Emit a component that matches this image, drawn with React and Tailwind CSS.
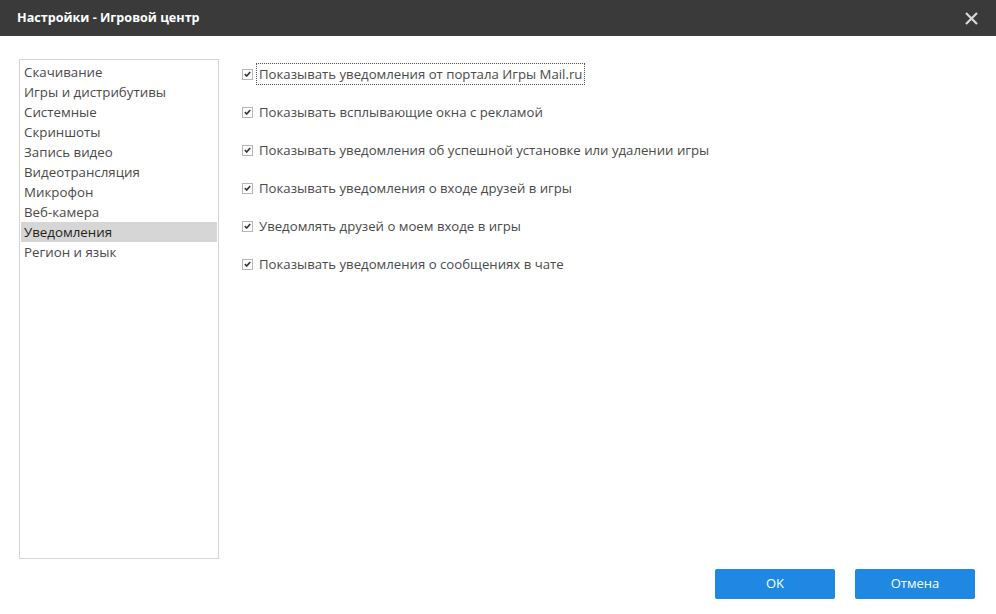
import React, { useState } from 'react';

const MENU = [
  'Скачивание',
  'Игры и дистрибутивы',
  'Системные',
  'Скриншоты',
  'Запись видео',
  'Видеотрансляция',
  'Микрофон',
  'Веб-камера',
  'Уведомления',
  'Регион и язык',
];

const OPTIONS = [
  'Показывать уведомления от портала Игры Mail.ru',
  'Показывать всплывающие окна с рекламой',
  'Показывать уведомления об успешной установке или удалении игры',
  'Показывать уведомления о входе друзей в игры',
  'Уведомлять друзей о моем входе в игры',
  'Показывать уведомления о сообщениях в чате',
];

const CheckBox = ({ checked }) => (
  <span className="w-[11px] h-[11px] border border-[#b5b5b5] bg-white flex items-center justify-center shrink-0">
    {checked && (
      <svg width="7" height="6" viewBox="0 0 7 6">
        <path d="M0.8 3.2 L2.7 5 L6.2 0.9" fill="none" stroke="#333" strokeWidth="1.6" />
      </svg>
    )}
  </span>
);

const App = () => {
  const [active, setActive] = useState('Уведомления');
  const [checks, setChecks] = useState(OPTIONS.map(() => true));

  return (
    <div className="w-[996px] h-[614px] bg-white flex flex-col text-[#333] font-['Open_Sans',sans-serif] overflow-hidden">
      <div className="h-[36px] bg-[#3a3a3a] flex items-center justify-between pl-[17px] pr-[18px] shrink-0">
        <span className="text-white font-bold text-[12.6px]">Настройки - Игровой центр</span>
        <svg width="13" height="13" viewBox="0 0 13 13">
          <path d="M1 1 L12 12 M12 1 L1 12" stroke="#d8d8d8" strokeWidth="2.2" />
        </svg>
      </div>

      <div className="flex flex-1 pt-[23px] pl-[19px]">
        <div className="w-[200px] h-[500px] border border-[#d4d4d4] pt-[2px] px-px shrink-0">
          {MENU.map((m) => (
            <div
              key={m}
              onClick={() => setActive(m)}
              className={`h-[20px] leading-[21px] text-[13.3px] pl-[3px] cursor-default ${
                active === m ? 'bg-[#d6d6d6] text-[#222]' : 'text-[#4a4a4a]'
              }`}
            >
              {m}
            </div>
          ))}
        </div>

        <div className="flex flex-col pl-[23px] pt-[5px] gap-[18px]">
          {OPTIONS.map((o, i) => (
            <label
              key={o}
              className="flex items-center h-[20px] text-[13.2px] text-[#4a4a4a] cursor-default"
              onClick={() => setChecks((p) => p.map((c, j) => (j === i ? !c : c)))}
            >
              <CheckBox checked={checks[i]} />
              <span
                className={`ml-[3px] px-[2px] leading-[20px] border border-dotted ${
                  i === 0 ? 'border-[#555]' : 'border-transparent'
                }`}
              >
                {o}
              </span>
            </label>
          ))}
        </div>
      </div>

      <div className="flex justify-end gap-[20px] pr-[21px] pb-[15px] shrink-0">
        <button
          type="button"
          className="w-[120px] h-[30px] rounded-[2px] bg-[#1e88e2] text-white text-[13px]"
        >
          OK
        </button>
        <button
          type="button"
          className="w-[120px] h-[30px] rounded-[2px] bg-[#1e88e2] text-white text-[13px]"
        >
          Отмена
        </button>
      </div>
    </div>
  );
};

export default App;
